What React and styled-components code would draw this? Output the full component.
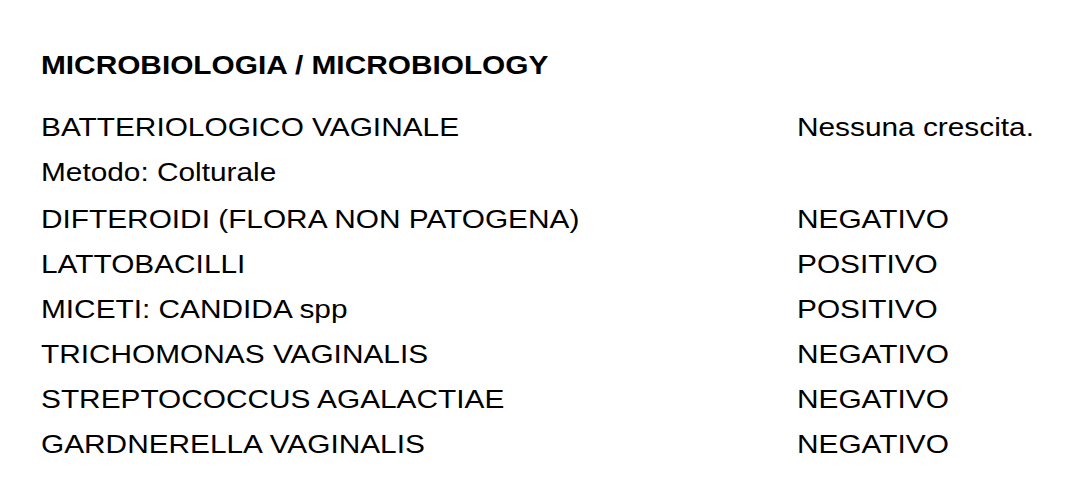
import React from "react";
import styled, { createGlobalStyle } from "styled-components";

const GlobalStyle = createGlobalStyle`
  html, body {
    margin: 0;
    padding: 0;
    background: #ffffff;
  }
  body {
    font-family: "Liberation Sans", Arial, sans-serif;
    color: #000000;
  }
`;

const Page = styled.div`
  width: 1080px;
  height: 490px;
  padding: 47px 0 0 41px;
  box-sizing: border-box;
  overflow: hidden;
`;

// the report's text is set a little wider than the plain font
const Wide = styled.span`
  display: inline-block;
  transform: scaleX(1.125);
  transform-origin: left center;
  white-space: nowrap;
`;

const Title = styled.h1`
  margin: 0 0 21px 0;
  font-size: 26.5px;
  font-weight: 700;
  line-height: 36px;
`;

const Row = styled.div`
  display: grid;
  grid-template-columns: 756px auto;
  align-items: center;
  height: 45px;
  margin-bottom: ${(p) => (p.$extra ? "2px" : "0")};
  font-size: 26.5px;
  line-height: 30px;
`;

const rows = [
  ["BATTERIOLOGICO VAGINALE", "Nessuna crescita."],
  ["Metodo: Colturale", "", true],
  ["DIFTEROIDI (FLORA NON PATOGENA)", "NEGATIVO"],
  ["LATTOBACILLI", "POSITIVO"],
  ["MICETI: CANDIDA spp", "POSITIVO"],
  ["TRICHOMONAS VAGINALIS", "NEGATIVO"],
  ["STREPTOCOCCUS AGALACTIAE", "NEGATIVO"],
  ["GARDNERELLA VAGINALIS", "NEGATIVO"],
];

export default function App() {
  return (
    <>
      <GlobalStyle />
      <Page>
        <Title>
          <Wide>MICROBIOLOGIA / MICROBIOLOGY</Wide>
        </Title>
        {rows.map(([name, value, extra], i) => (
          <Row key={"row_" + i} $extra={extra}>
            <div>
              <Wide>{name}</Wide>
            </div>
            <div>
              <Wide>{value}</Wide>
            </div>
          </Row>
        ))}
      </Page>
    </>
  );
}
